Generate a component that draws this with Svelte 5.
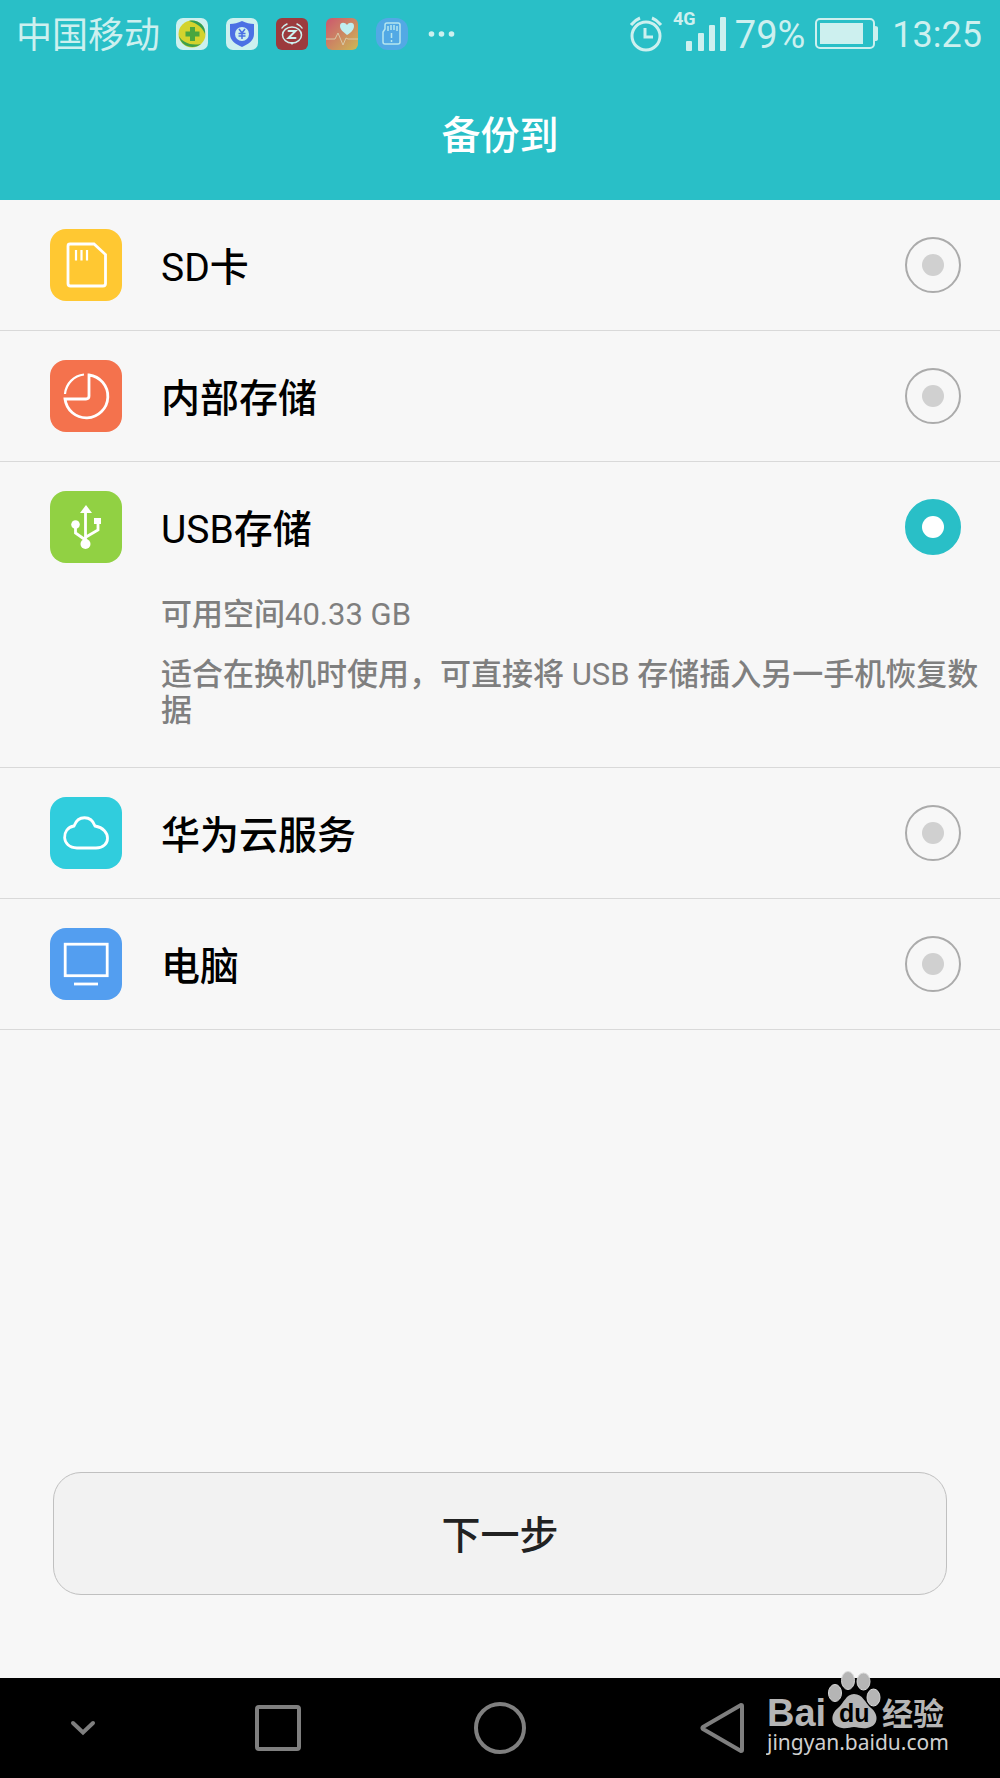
<script>
	const carrier = '中国移动';
	const battery = 79;

	const targets = [
		{ id: 'sd', name: 'SD卡', color: '#ffc832' },
		{ id: 'internal', name: '内部存储', color: '#f4724d' },
		{
			id: 'usb',
			name: 'USB存储',
			color: '#91d143',
			space: '可用空间40.33 GB',
			hint: '适合在换机时使用，可直接将 USB 存储插入另一手机恢复数据'
		},
		{ id: 'cloud', name: '华为云服务', color: '#30cddd' },
		{ id: 'pc', name: '电脑', color: '#539ef0' }
	];

	let selected = $state('usb');

	// odd entries are the latin runs, they take a lighter weight than the hanzi
	function runs(text) {
		return text.split(/([\x20-\x7e]+)/);
	}
</script>

{#snippet mixed(text)}
	{#each runs(text) as run, i}{#if i % 2}<span class="latin">{run}</span>{:else}{run}{/if}{/each}
{/snippet}

<div class="screen">
	<header>
		<div class="status">
			<div class="notices">
				<span class="carrier">{carrier}</span>
				<!-- 360 -->
				<svg width="32" height="32" viewBox="0 0 32 32">
					<rect width="32" height="32" rx="7" fill="#cdf0ef" />
					<circle cx="16" cy="16" r="13.500" fill="#d3d32e" />
					<path d="M13 3c8-2 17 4 16 13-2-6-8-11-16-13z" fill="#2f9d58" />
					<path d="M3 18c3 6 11 10 22 8-7 6-20 3-22-8z" fill="#3da04c" />
					<path d="M14 9h5v4.500h4.500v5H19V23h-5v-4.500H9.500v-5H14z" fill="#4aa63f" />
				</svg>
				<!-- payment guard -->
				<svg width="32" height="32" viewBox="0 0 32 32">
					<rect width="32" height="32" rx="7" fill="#cdf0ef" />
					<path d="M16 3c4 2 8 3 12 3v10c0 6-5 10-12 13C9 26 4 22 4 16V6c4 0 8-1 12-3z" fill="#4b70e4" />
					<circle cx="16" cy="16" r="7" fill="#cdf0ef" />
					<path d="M13 11l3 4 3-4M16 15v6M12.500 15.500h7M12.500 18h7" fill="none" stroke="#4b70e4" stroke-width="1.500" />
				</svg>
				<!-- alarm app -->
				<svg width="32" height="32" viewBox="0 0 32 32">
					<rect width="32" height="32" rx="6" fill="#9c3a3d" />
					<g fill="none" stroke="#cdf0ef" stroke-width="1.500" stroke-linecap="round">
						<ellipse cx="16" cy="17" rx="9.500" ry="8" />
						<path d="M6 10c1-2 3-3 5-4M26 10c-1-2-3-3-5-4" />
						<path d="M12.500 13h7l-7 7h7" stroke-width="2" />
					</g>
					<path d="M13.500 24h5L16 27z" fill="#cdf0ef" />
				</svg>
				<!-- health -->
				<svg width="32" height="32" viewBox="0 0 32 32">
					<defs>
						<linearGradient id="health" x1="0" y1="0" x2="1" y2="1">
							<stop offset="0" stop-color="#cc566f" />
							<stop offset="1" stop-color="#ccb955" />
						</linearGradient>
					</defs>
					<rect width="32" height="32" rx="6" fill="url(#health)" />
					<path d="M0 21h9l3-6 5 12 3-7 2 1h10" fill="none" stroke="#d9c9a8" stroke-width="1" />
					<path d="M21 17c-5-4-7-6-7-9 0-4 5-4 7-1 2-3 7-3 7 1 0 3-2 6-7 9z" fill="#bfeef0" />
				</svg>
				<!-- sd card -->
				<svg width="32" height="32" viewBox="0 0 32 32">
					<rect width="32" height="32" rx="12" fill="#52a9e5" />
					<g fill="none" stroke="#b5e6ee" stroke-width="1.500">
						<path d="M11 5h11q2 0 2 2v17q0 2-2 2H9q-2 0-2-2V14l2-3V7q0-2 2-2z" />
						<path d="M12 8v5M15 7v5M18 7v5M21 8v5M15.500 15v5M15.500 22v2" />
					</g>
				</svg>
				<svg width="32" height="32" viewBox="0 0 32 32" fill="#cdf0ef">
					<circle cx="5.500" cy="16" r="2.800" />
					<circle cx="15.500" cy="16" r="2.800" />
					<circle cx="25.500" cy="16" r="2.800" />
				</svg>
			</div>

			<div class="system">
				<svg width="34" height="36" viewBox="0 0 34 36" fill="none" stroke="#cdf0ef" stroke-width="3">
					<circle cx="17" cy="20" r="14" />
					<path d="M16 12v9h8" />
					<path d="M2 9q4-5 9-7M32 9q-4-5-9-7" />
				</svg>
				<svg class="signal" width="54" height="46" viewBox="0 0 54 46" fill="#cdf0ef">
					<text x="0" y="14">4G</text>
					<rect x="13" y="30" width="6" height="10" rx="1" />
					<rect x="25" y="22" width="6" height="18" rx="1" />
					<rect x="36" y="14" width="6" height="26" rx="1" />
					<rect x="47" y="6" width="6" height="34" rx="1" />
				</svg>
				<span class="percent">{battery}%</span>
				<svg width="63" height="32" viewBox="0 0 63 32">
					<rect x="1" y="1" width="58" height="29" rx="4" fill="none" stroke="#cdf0ef" stroke-width="2" />
					<rect x="5" y="5" width="43" height="21" fill="#cdf0ef" />
					<path d="M60 8q3 0 3 2v11q0 2-3 2z" fill="#cdf0ef" />
				</svg>
				<time>13:25</time>
			</div>
		</div>
		<h1>备份到</h1>
	</header>

	<main>
		<ul>
			{#each targets as t (t.id)}
				<li>
					<label>
						<svg class="icon" viewBox="0 0 72 72" fill="none" stroke="#fff" stroke-width="2.800">
							<rect width="72" height="72" rx="16" fill={t.color} stroke="none" />
							{#if t.id === 'sd'}
								<path d="M20 15h24l11.500 10.500v29q0 2.500-2.500 2.500H20.500q-2.500 0-2.500-2.500V17q0-2 2-2z" />
								<path d="M26 21v10.500M31.500 21v10.500M37 21v10.500" stroke-width="2.200" />
							{:else if t.id === 'internal'}
								<path d="M34 14.500A21.500 21.500 0 0 0 15 34" stroke-width="2.200" />
								<path d="M39 15A21.500 21.500 0 1 1 15 39h21q3 0 3-3z" />
							{:else if t.id === 'usb'}
								<g fill="#fff" stroke="none">
									<path d="M36 14l6 8H30z" />
									<circle cx="25.500" cy="33.500" r="4.300" />
									<circle cx="35.500" cy="53" r="5" />
									<rect x="44" y="27" width="7" height="6" />
								</g>
								<path d="M35.500 20v30M25.500 34v8l10 7M48 32v7l-12 7" stroke-width="2.800" />
							{:else if t.id === 'cloud'}
								<path d="M27 51C11 51 11 31 24 29C28 18 41 18 45 29C62 32 61 51 46 51Z" />
							{:else}
								<rect x="15.200" y="16.200" width="42" height="31.500" />
								<path d="M24 56h24" />
							{/if}
						</svg>
						<span class="name">{@render mixed(t.name)}</span>
						<input type="radio" name="target" value={t.id} bind:group={selected} />
					</label>
					{#if t.id === selected && t.space}
						<div class="detail">
							<p>{@render mixed(t.space)}</p>
							<p>{@render mixed(t.hint)}</p>
						</div>
					{/if}
				</li>
			{/each}
		</ul>
		<button class="next">下一步</button>
	</main>

	<nav>
		<button aria-label="收起">
			<svg width="26" height="16" viewBox="0 0 26 16" fill="none" stroke="#7f7f7f" stroke-width="4" stroke-linecap="round">
				<path d="M3 3l10 9.500L23 3" />
			</svg>
		</button>
		<button aria-label="最近任务">
			<svg width="46" height="46" viewBox="0 0 46 46" fill="none" stroke="#7f7f7f" stroke-width="4">
				<rect x="2" y="2" width="42" height="42" rx="2" />
			</svg>
		</button>
		<button aria-label="主屏幕">
			<svg width="52" height="52" viewBox="0 0 52 52" fill="none" stroke="#7f7f7f" stroke-width="4">
				<circle cx="26" cy="26" r="24" />
			</svg>
		</button>
		<button aria-label="返回">
			<svg width="44" height="50" viewBox="0 0 44 50" fill="none" stroke="#7f7f7f" stroke-width="4" stroke-linejoin="round">
				<path d="M42 3v44q0 1-1 1L3 26q-1-1 0-2L41 2q1 0 1 1z" />
			</svg>
		</button>

		<div class="watermark">
			<svg width="184" height="90" viewBox="0 0 184 90" fill="#b5b5b5">
				<g stroke="#d8d8d8" stroke-width="1">
					<ellipse cx="69" cy="22" rx="6.500" ry="8.500" />
					<ellipse cx="82" cy="9.500" rx="6.500" ry="9" />
					<ellipse cx="97.500" cy="10.500" rx="6.500" ry="8.500" />
					<ellipse cx="107.500" cy="26.500" rx="6.500" ry="8.500" />
				</g>
				<path d="M88 23c-8 0-10 9-16 14-8 6-8 18 4 20 5 1 8-1 12-1s8 2 13 1c12-2 12-14 4-20-6-5-8-14-17-14z" />
				<text class="brand" x="1" y="55">Bai</text>
				<text class="du" x="73" y="51">du</text>
				<text class="cn" x="116" y="54">经验</text>
				<text class="site" x="1" y="79">jingyan.baidu.com</text>
			</svg>
		</div>
	</nav>
</div>

<style>
	:global(body) {
		margin: 0;
		background: #f7f7f7;
		font-family: Roboto, 'Noto Sans CJK SC', sans-serif;
	}

	.screen {
		display: flex;
		flex-direction: column;
		min-height: 100vh;
	}

	svg {
		display: block;
		flex-shrink: 0;
	}

	.latin {
		font-weight: 400;
	}

	header {
		background: #29bfc7;
		color: #fff;
	}

	.status {
		display: flex;
		justify-content: space-between;
		align-items: center;
		height: 68px;
		padding: 0 18px 0 16px;
		color: #cdf0ef;
		font-size: 36px;
		line-height: 36px;
	}

	.notices,
	.system {
		display: flex;
		align-items: center;
	}

	.notices {
		gap: 16px;
	}

	.notices svg + svg {
		margin-left: 2px;
	}

	.carrier {
		padding-top: 4px;
	}

	.percent,
	time {
		padding-top: 2px;
	}

	.system {
		gap: 10px;
	}

	.percent {
		margin-left: -2px;
		font-size: 38px;
	}

	time {
		margin-left: 4px;
	}

	.signal {
		overflow: visible;
	}

	.signal text {
		font-size: 18px;
		font-weight: 700;
	}

	h1 {
		margin: 0;
		padding-top: 4px;
		font-size: 39px;
		font-weight: 500;
		line-height: 128px;
		text-align: center;
	}

	main {
		flex: 1;
		display: flex;
		flex-direction: column;
		justify-content: space-between;
	}

	ul {
		margin: 0;
		padding: 0;
		list-style: none;
	}

	li {
		border-bottom: 1px solid #d9d9d9;
		font-weight: 500;
	}

	label {
		display: flex;
		align-items: center;
		height: 130px;
		padding: 0 39px 0 50px;
		color: #000;
		font-size: 39px;
		cursor: pointer;
	}

	.icon {
		width: 72px;
		height: 72px;
		margin-right: 39px;
	}

	.name {
		flex: 1;
		padding-top: 6px;
		line-height: 48px;
	}

	input {
		appearance: none;
		display: grid;
		place-items: center;
		width: 56px;
		height: 56px;
		margin: 0;
		border: 2px solid #ababab;
		border-radius: 50%;
		cursor: pointer;
	}

	input::before {
		content: '';
		width: 22px;
		height: 22px;
		border-radius: 50%;
		background: #d0d0d0;
	}

	input:checked {
		border-color: #29bfc7;
		background: #29bfc7;
	}

	input:checked::before {
		background: #fff;
	}

	.detail {
		padding: 5px 20px 38px 161px;
		color: #7f7f7f;
		font-size: 31px;
		line-height: 36px;
	}

	.detail p {
		margin: 0 0 24px;
	}

	.detail p:last-child {
		margin: 0;
	}

	.next {
		height: 123px;
		margin: 40px 53px 83px;
		padding: 0 0 4px;
		border: 1px solid #c0c0c0;
		border-radius: 28px;
		background: #f2f2f2;
		color: #222;
		font-family: inherit;
		font-size: 39px;
		font-weight: 500;
		cursor: pointer;
	}

	nav {
		position: relative;
		display: grid;
		grid-template-columns: 3fr 4fr 4fr 4fr 3fr;
		height: 100px;
		background: #000;
	}

	nav button {
		display: grid;
		place-items: center;
		padding: 0;
		border: none;
		background: none;
		cursor: pointer;
	}

	.watermark {
		position: absolute;
		right: 50px;
		bottom: 17px;
	}

	.brand {
		font: 700 38px 'Liberation Sans', sans-serif;
	}

	.du {
		fill: #000;
		font: 700 25px 'Liberation Sans', sans-serif;
	}

	.cn {
		font-size: 31px;
		font-weight: 700;
	}

	.site {
		fill: #d0d0d0;
		font: 21px 'Noto Sans', sans-serif;
	}
</style>
